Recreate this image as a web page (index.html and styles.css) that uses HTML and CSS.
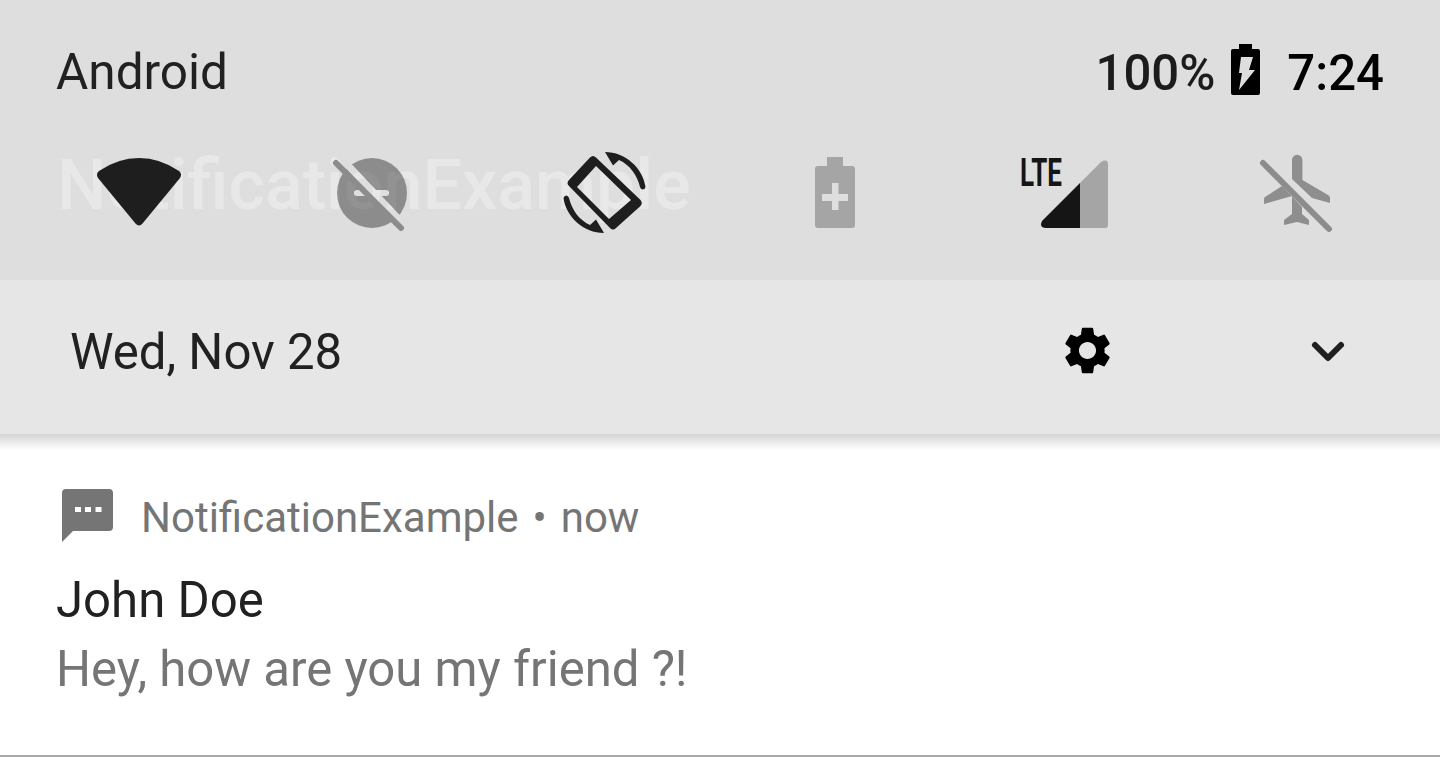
FILE: index.html
```html
<!DOCTYPE html>
<html lang="en">
<head>
    <meta charset="UTF-8">
    <meta name="viewport" content="width=device-width, initial-scale=1.0">
    <title>NotificationExample</title>
    <link rel="stylesheet" href="styles.css">
</head>
<body>

    <div class="panel">
        <div class="ghost-title">NotificationExample</div>

        <div class="status-bar">
            <span class="carrier">Android</span>
            <div class="status-right">
                <span class="battery-pct">100%</span>
                <svg class="battery-icon" viewBox="1231 44 29 51">
                    <path class="fill-black" d="M1239 44h13v5h6q2 0 2 2v42q0 2-2 2h-25q-2 0-2-2V51q0-2 2-2h6z"/>
                    <path class="fill-bg" d="M1241 57h12l-4 13h6l-16 20 3-17h-3z"/>
                </svg>
                <span class="clock">7:24</span>
            </div>
        </div>

        <div class="quick-row">
            <div class="quick-cell">
                <svg class="quick-icon" viewBox="89 143 100 100">
                    <path class="fill-dark" d="M135.500 223.500 98 178q-2.500-4 1-7 19-13 40-13t40 13q3.500 3 1 7l-37.500 45.500q-3.500 4-7 0z"/>
                </svg>
            </div>
            <div class="quick-cell">
                <svg class="quick-icon" viewBox="321 143 100 100">
                    <mask id="dnd-cut">
                        <rect x="321" y="143" width="100" height="100" fill="#fff"/>
                        <rect x="354" y="190" width="35" height="6" rx="3" fill="#000"/>
                        <line x1="341" y1="158" x2="407" y2="228" stroke="#000" stroke-width="7"/>
                    </mask>
                    <circle class="fill-off" cx="372" cy="193" r="35" mask="url(#dnd-cut)"/>
                    <line class="line-off" x1="336" y1="163" x2="401" y2="228"/>
                </svg>
            </div>
            <div class="quick-cell">
                <svg class="quick-icon" viewBox="553 143 100 100">
                    <path class="fill-dark" fill-rule="evenodd" d="M590 157.500Q593 154.500 596 157.500L640.500 200Q643 203 640.500 206L616 228Q613 231 610 228L569 186Q566 183 569 180ZM596 166 631 200 609 219 577 187Z"/>
                    <path class="fill-dark" d="M605 152C625 152 643 168 645.500 187Q645 189.500 642.500 189.500Q640.500 189 640 187C637 175 630 165 619 160L613 165.500Z"/>
                    <path class="fill-dark" d="M604 233C584 233 566 217 563.500 198Q564 195.500 566.500 195.500Q568.500 196 569 198C572 210 579 220 590 225L596 219.500Z"/>
                </svg>
            </div>
            <div class="quick-cell">
                <svg class="quick-icon" viewBox="785 143 100 100">
                    <path class="fill-mid" d="M827 157h16v9h9q3 0 3 3v56q0 3-3 3h-34q-3 0-3-3v-56q0-3 3-3h9z"/>
                    <path class="fill-bg" d="M832 183h6.500v11H848v7h-9.500v9H832v-9h-10v-7h10z"/>
                </svg>
            </div>
            <div class="quick-cell">
                <svg class="quick-icon" viewBox="1017 143 100 100">
                    <text class="lte-label" x="1020" y="186" textLength="42" lengthAdjust="spacingAndGlyphs">LTE</text>
                    <path class="fill-mid" d="M1080 183 1101 162q7-4 7 3v60q0 3-3 3h-25z"/>
                    <path class="fill-signal" d="M1080 183v45h-35q-6-1-3-7z"/>
                </svg>
            </div>
            <div class="quick-cell">
                <svg class="quick-icon" viewBox="1249 143 100 100">
                    <path class="fill-plane" d="M1292 179V160a5.200 5.200 0 0 1 10.400 0V180L1328 195q2 1 2 3v5L1312 198z"/>
                    <path class="fill-plane" d="M1282 186 1265 197q-1 1-1 2v5L1292 196V214L1284 220v5l13-3 12 3v-5l-7-6v-7z"/>
                    <line class="line-off" x1="1263" y1="163" x2="1329" y2="229"/>
                </svg>
            </div>
        </div>
    </div>

    <div class="date-bar">
        <span class="date-text">Wed, Nov 28</span>
        <svg class="gear-icon" viewBox="0 0 24 24">
            <path class="fill-black" d="M19.140 12.940c.04-.3.06-.61.06-.94 0-.32-.02-.64-.07-.94l2.030-1.580c.18-.14.23-.41.12-.61l-1.920-3.320c-.12-.22-.37-.29-.59-.22l-2.390.96c-.5-.38-1.030-.7-1.620-.94l-.36-2.540c-.04-.24-.24-.41-.48-.41h-3.840c-.24 0-.43.17-.47.41l-.36 2.540c-.59.24-1.130.57-1.620.94l-2.390-.96c-.22-.08-.47 0-.59.22L2.740 8.870c-.12.21-.08.47.12.61l2.030 1.580c-.05.3-.09.63-.09.94s.02.64.07.94l-2.030 1.580c-.18.14-.23.41-.12.61l1.920 3.320c.12.22.37.29.59.22l2.390-.96c.5.38 1.030.7 1.620.94l.36 2.540c.05.24.24.41.48.41h3.840c.24 0 .44-.17.47-.41l.36-2.540c.59-.24 1.130-.56 1.620-.94l2.390.96c.22.08.47 0 .59-.22l1.920-3.320c.12-.22.07-.47-.12-.61l-2.010-1.580zM12 15.600c-1.980 0-3.600-1.620-3.600-3.600s1.620-3.600 3.600-3.600 3.600 1.620 3.600 3.600-1.620 3.600-3.600 3.600z"/>
        </svg>
        <svg class="chevron-icon" viewBox="0 0 40 30">
            <polyline class="chevron-line" points="7,9 20,22 33,9"/>
        </svg>
    </div>

    <div class="notification">
        <div class="notif-header">
            <svg class="app-icon" viewBox="62 489 51 53">
                <path class="fill-grey" d="M66 489h43q4 0 4 4v34q0 4-4 4H73l-11 11V493q0-4 4-4z"/>
                <path class="fill-white" d="M75 507h6v5h-6zM85 507h6v5h-6zM95.500 507h6v5h-6z"/>
            </svg>
            <span class="app-name">NotificationExample</span>
            <span class="dot">•</span>
            <span class="app-name">now</span>
        </div>
        <div class="notif-title">John Doe</div>
        <div class="notif-text">Hey, how are you my friend ?!</div>
    </div>

    <div class="divider"></div>

</body>
</html>
```

FILE: styles.css
```css
body {
    margin: 0;
    background-color: #ffffff;
    font-family: Roboto, sans-serif;
    font-size: 49.100px;
    color: #212121;
    overflow: hidden;
}

.panel {
    position: relative;
    height: 280px;
    background-color: #dedede;
}

.ghost-title {
    position: absolute;
    left: 57px;
    top: 144px;
    font-size: 70px;
    font-weight: 500;
    line-height: 82px;
    color: #e8e8e8;
}

.status-bar {
    height: 143px;
    box-sizing: border-box;
    padding: 2px 56px 0;
    display: flex;
    justify-content: space-between;
    align-items: center;
}

.carrier {
    font-size: 49.500px;
    margin-bottom: 2px;
}

.status-right {
    display: flex;
    align-items: center;
}

.battery-pct {
    font-weight: 500;
    color: #1c1c1c;
}

.battery-icon {
    width: 29px;
    height: 51px;
    margin-left: 16px;
    margin-bottom: 6px;
}

.clock {
    font-weight: 500;
    color: #000000;
    margin-left: 27px;
}

.quick-row {
    position: relative;
    height: 100px;
    padding-left: 23px;
    display: flex;
}

.quick-cell {
    width: 232px;
    display: flex;
    justify-content: center;
}

.quick-icon {
    width: 100px;
    height: 100px;
}

.fill-black { fill: #000000; }
.fill-dark { fill: #1e1e1e; }
.fill-bg { fill: #dedede; }
.fill-mid { fill: #a5a5a5; }
.fill-signal { fill: #151515; }
.fill-grey { fill: #757575; }
.fill-white { fill: #ffffff; }
.fill-off { fill: #000000; fill-opacity: 0.37; }
.fill-plane { fill: #8e8e8e; }

.line-off {
    stroke: #8c8c8c;
    stroke-width: 6;
    stroke-linecap: round;
}

.lte-label {
    font-family: Roboto, sans-serif;
    font-size: 38px;
    font-weight: 700;
    fill: #151515;
}

.date-bar {
    height: 154px;
    box-sizing: border-box;
    padding-right: 92px;
    padding-left: 70px;
    display: flex;
    align-items: center;
    background-color: #e6e6e6;
}

.date-text {
    flex: 1;
    margin-bottom: 10px;
}

.gear-icon {
    width: 57px;
    height: 57px;
    margin-right: 192px;
    margin-bottom: 14px;
}

.chevron-icon {
    width: 40px;
    height: 30px;
    margin-bottom: 12px;
}

.chevron-line {
    fill: none;
    stroke: #202020;
    stroke-width: 6;
    stroke-linecap: round;
    stroke-linejoin: round;
}

.notification {
    height: 321px;
    box-sizing: border-box;
    padding: 55px 0 0 56px;
    background: linear-gradient(#d4d4d4, #ffffff 16px);
}

.notif-header {
    height: 53px;
    display: flex;
    align-items: center;
    color: #757575;
    font-size: 42px;
}

.app-icon {
    width: 51px;
    height: 53px;
    margin-left: 6px;
    margin-right: 28px;
}

.app-name {
    margin-top: 4px;
}

.dot {
    margin: 4px 14px 0;
}

.notif-title {
    margin-top: 29px;
    line-height: 58px;
}

.notif-text {
    margin-top: 11px;
    line-height: 58px;
    color: #757575;
}

.divider {
    height: 2px;
    background-color: #a8a8a8;
}
```
